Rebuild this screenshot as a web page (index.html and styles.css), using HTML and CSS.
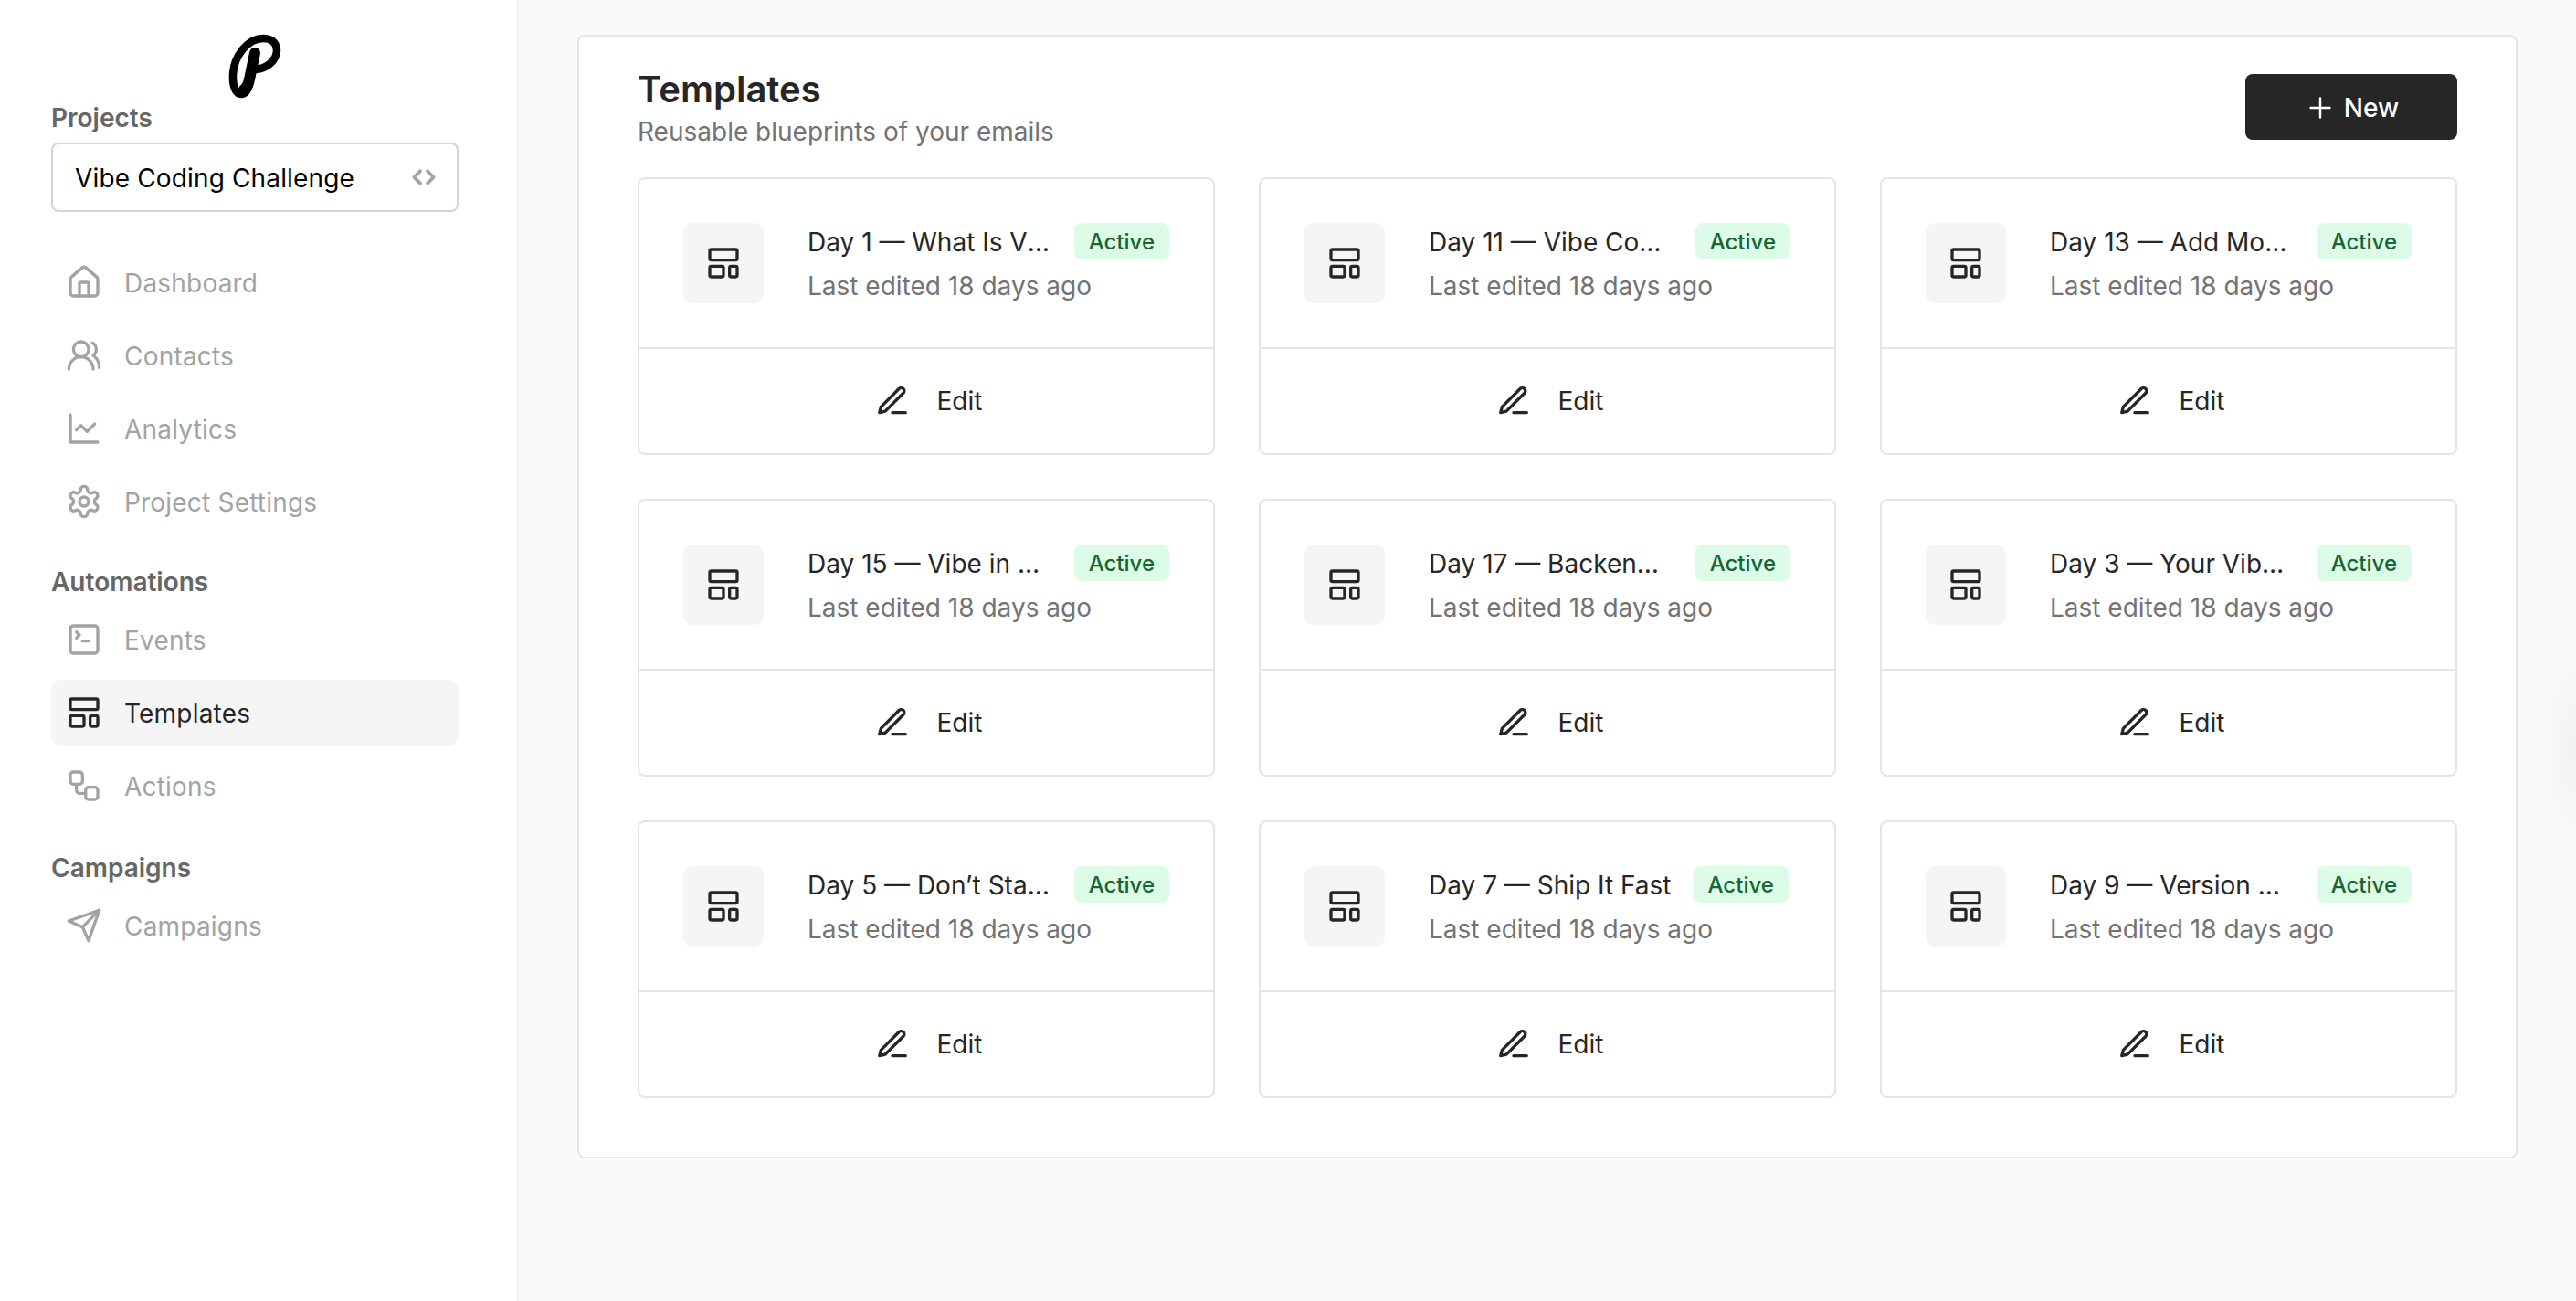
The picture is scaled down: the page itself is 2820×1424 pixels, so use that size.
FILE: index.html
```html
<!DOCTYPE html>
<html lang="en">
<head>
<meta charset="utf-8">
<title>Templates</title>
<link rel="stylesheet" href="styles.css">
</head>
<body>
<svg class="sprite" aria-hidden="true">
  <symbol id="i-home" viewBox="0 0 24 24"><path d="M15 21v-8a1 1 0 0 0-1-1h-4a1 1 0 0 0-1 1v8"/><path d="M3 10a2 2 0 0 1 .709-1.528l7-5.999a2 2 0 0 1 2.582 0l7 5.999A2 2 0 0 1 21 10v9a2 2 0 0 1-2 2H5a2 2 0 0 1-2-2z"/></symbol>
  <symbol id="i-users" viewBox="0 0 24 24"><path d="M18 21a8 8 0 0 0-16 0"/><circle cx="10" cy="8" r="5"/><path d="M22 20c0-3.37-2-6.5-4-8a5 5 0 0 0-.45-8.3"/></symbol>
  <symbol id="i-chart" viewBox="0 0 24 24"><path d="M3 3v18h18"/><path d="m19 9-5 5-4-4-3 3"/></symbol>
  <symbol id="i-gear" viewBox="0 0 24 24"><path d="M12.22 2h-.44a2 2 0 0 0-2 2v.18a2 2 0 0 1-1 1.73l-.43.25a2 2 0 0 1-2 0l-.15-.08a2 2 0 0 0-2.73.73l-.22.38a2 2 0 0 0 .73 2.73l.15.1a2 2 0 0 1 1 1.72v.51a2 2 0 0 1-1 1.74l-.15.09a2 2 0 0 0-.73 2.73l.22.38a2 2 0 0 0 2.73.73l.15-.08a2 2 0 0 1 2 0l.43.25a2 2 0 0 1 1 1.73V20a2 2 0 0 0 2 2h.44a2 2 0 0 0 2-2v-.18a2 2 0 0 1 1-1.73l.43-.25a2 2 0 0 1 2 0l.15.08a2 2 0 0 0 2.73-.73l.22-.39a2 2 0 0 0-.73-2.73l-.15-.08a2 2 0 0 1-1-1.74v-.5a2 2 0 0 1 1-1.74l.15-.09a2 2 0 0 0 .73-2.73l-.22-.38a2 2 0 0 0-2.73-.73l-.15.08a2 2 0 0 1-2 0l-.43-.25a2 2 0 0 1-1-1.73V4a2 2 0 0 0-2-2z"/><circle cx="12" cy="12" r="3"/></symbol>
  <symbol id="i-term" viewBox="0 0 24 24"><path d="m7 11 2-2-2-2"/><path d="M11 13h4"/><rect x="3" y="3" width="18" height="18" rx="2"/></symbol>
  <symbol id="i-layout" viewBox="0 0 24 24"><rect x="3" y="3" width="18" height="7" rx="1"/><rect x="3" y="14" width="9" height="7" rx="1"/><rect x="16" y="14" width="5" height="7" rx="1"/></symbol>
  <symbol id="i-flow" viewBox="0 0 24 24"><rect x="3" y="3" width="8" height="8" rx="2"/><path d="M7 11v4a2 2 0 0 0 2 2h4"/><rect x="13" y="13" width="8" height="8" rx="2"/></symbol>
  <symbol id="i-send" viewBox="0 0 24 24"><path d="m22 2-7 20-4-9-9-4Z"/><path d="M22 2 11 13"/></symbol>
  <symbol id="i-pen" viewBox="0 0 24 24"><path d="M12 20h9"/><path d="M16.5 3.5a2.12 2.12 0 0 1 3 3L7 19l-4 1 1-4Z"/></symbol>
  <symbol id="i-plus" viewBox="0 0 24 24"><path d="M5 12h14"/><path d="M12 5v14"/></symbol>
  <symbol id="i-swap" viewBox="0 0 24 24"><path d="m9 7-5 5 5 5"/><path d="m15 7 5 5-5 5"/></symbol>
</svg>

<div class="app">
  <aside class="sidebar">
    <svg class="logo" viewBox="0 0 58 70" aria-label="Logo"><path class="logo-loop" d="M30 38C42 37 53 28 53 17 53 8 46 4 38 4 22 4 6 22 5 44 4.500 56 8 65 14 65 19 65 22 60 23 54"/><path class="logo-stem" d="M17 60C20 58 22 54 23 49L29 20"/></svg>
    <div class="group-label first">Projects</div>
    <div class="select">
      <span class="select-text">Vibe Coding Challenge</span>
      <svg class="select-icon"><use href="#i-swap"/></svg>
    </div>
    <nav class="nav">
      <a class="nav-item"><svg class="icon"><use href="#i-home"/></svg>Dashboard</a>
      <a class="nav-item"><svg class="icon"><use href="#i-users"/></svg>Contacts</a>
      <a class="nav-item"><svg class="icon"><use href="#i-chart"/></svg>Analytics</a>
      <a class="nav-item"><svg class="icon"><use href="#i-gear"/></svg>Project Settings</a>
      <div class="group-label">Automations</div>
      <a class="nav-item"><svg class="icon"><use href="#i-term"/></svg>Events</a>
      <a class="nav-item active"><svg class="icon"><use href="#i-layout"/></svg>Templates</a>
      <a class="nav-item"><svg class="icon"><use href="#i-flow"/></svg>Actions</a>
      <div class="group-label late">Campaigns</div>
      <a class="nav-item"><svg class="icon"><use href="#i-send"/></svg>Campaigns</a>
    </nav>
  </aside>

  <main class="main">
    <section class="panel">
      <header class="panel-head">
        <div>
          <h1 class="title">Templates</h1>
          <p class="subtitle">Reusable blueprints of your emails</p>
        </div>
        <button class="btn-new"><svg class="plus"><use href="#i-plus"/></svg>New</button>
      </header>
      <div class="grid">
        <article class="card"><div class="card-body"><div class="thumb"><svg class="icon"><use href="#i-layout"/></svg></div><div class="info"><div class="line"><span class="name">Day 1 — What Is Vibe Coding?</span><span class="badge">Active</span></div><div class="meta">Last edited 18 days ago</div></div></div><a class="card-foot"><svg class="pen"><use href="#i-pen"/></svg>Edit</a></article>
        <article class="card"><div class="card-body"><div class="thumb"><svg class="icon"><use href="#i-layout"/></svg></div><div class="info"><div class="line"><span class="name">Day 11 — Vibe Coding Tools</span><span class="badge">Active</span></div><div class="meta">Last edited 18 days ago</div></div></div><a class="card-foot"><svg class="pen"><use href="#i-pen"/></svg>Edit</a></article>
        <article class="card"><div class="card-body"><div class="thumb"><svg class="icon"><use href="#i-layout"/></svg></div><div class="info"><div class="line"><span class="name">Day 13 — Add More Features</span><span class="badge">Active</span></div><div class="meta">Last edited 18 days ago</div></div></div><a class="card-foot"><svg class="pen"><use href="#i-pen"/></svg>Edit</a></article>
        <article class="card"><div class="card-body"><div class="thumb"><svg class="icon"><use href="#i-layout"/></svg></div><div class="info"><div class="line"><span class="name">Day 15 — Vibe in Production</span><span class="badge">Active</span></div><div class="meta">Last edited 18 days ago</div></div></div><a class="card-foot"><svg class="pen"><use href="#i-pen"/></svg>Edit</a></article>
        <article class="card"><div class="card-body"><div class="thumb"><svg class="icon"><use href="#i-layout"/></svg></div><div class="info"><div class="line"><span class="name">Day 17 — Backend Basics Guide</span><span class="badge">Active</span></div><div class="meta">Last edited 18 days ago</div></div></div><a class="card-foot"><svg class="pen"><use href="#i-pen"/></svg>Edit</a></article>
        <article class="card"><div class="card-body"><div class="thumb"><svg class="icon"><use href="#i-layout"/></svg></div><div class="info"><div class="line"><span class="name">Day 3 — Your Vibe Stack Setup</span><span class="badge">Active</span></div><div class="meta">Last edited 18 days ago</div></div></div><a class="card-foot"><svg class="pen"><use href="#i-pen"/></svg>Edit</a></article>
        <article class="card"><div class="card-body"><div class="thumb"><svg class="icon"><use href="#i-layout"/></svg></div><div class="info"><div class="line"><span class="name">Day 5 — Don’t Start With Code</span><span class="badge">Active</span></div><div class="meta">Last edited 18 days ago</div></div></div><a class="card-foot"><svg class="pen"><use href="#i-pen"/></svg>Edit</a></article>
        <article class="card"><div class="card-body"><div class="thumb"><svg class="icon"><use href="#i-layout"/></svg></div><div class="info"><div class="line"><span class="name">Day 7 — Ship It Fast</span><span class="badge">Active</span></div><div class="meta">Last edited 18 days ago</div></div></div><a class="card-foot"><svg class="pen"><use href="#i-pen"/></svg>Edit</a></article>
        <article class="card"><div class="card-body"><div class="thumb"><svg class="icon"><use href="#i-layout"/></svg></div><div class="info"><div class="line"><span class="name">Day 9 — Version Control Basics</span><span class="badge">Active</span></div><div class="meta">Last edited 18 days ago</div></div></div><a class="card-foot"><svg class="pen"><use href="#i-pen"/></svg>Edit</a></article>
      </div>
    </section>
  </main>
  <div class="edge-glow"></div>
</div>
</body>
</html>
```
FILE: styles.css
```css
* { box-sizing: border-box; }
html, body { margin: 0; height: 100%; }
body {
  font-family: "Inter", "Liberation Sans", sans-serif;
  font-size: 28px;
  color: #262626;
  background: #fafafa;
  overflow: hidden;
}
.sprite { display: none; }
svg { fill: none; stroke: currentColor; stroke-width: 2; stroke-linecap: round; stroke-linejoin: round; flex: none; }

.app { position: relative; display: flex; height: 1424px; overflow: hidden; }
.edge-glow {
  position: absolute;
  top: 700px;
  right: -40px;
  width: 80px;
  height: 240px;
  border-radius: 50%;
  background: radial-gradient(closest-side, rgba(0, 0, 0, .035), rgba(0, 0, 0, 0));
}

.sidebar {
  width: 568px;
  flex: none;
  background: #fff;
  border-right: 2px solid #f0f0f0;
  padding: 38px 64px 0 56px;
}
.logo { display: block; width: 58px; height: 70px; margin: 0 auto; color: #000; overflow: visible; }
.logo-loop { stroke-width: 8.5; }
.logo-stem { stroke-width: 12; }
.group-label { font-weight: 600; line-height: 36px; color: #666; margin: 33px 0 10px; }
.group-label.first { margin: 3px 0 9px; }
.select {
  display: flex;
  align-items: center;
  justify-content: space-between;
  height: 76px;
  padding: 2px 20px 0 24px;
  border: 2px solid #d4d4d4;
  border-radius: 8px;
  color: #000;
}
.select-text { letter-spacing: .15px; }
.select-icon { width: 32px; height: 32px; margin-top: -2px; color: #a3a3a3; stroke-width: 2.8; }
.nav { display: flex; flex-direction: column; gap: 8px; margin-top: 41px; }
.nav .group-label { margin: 25px 0 2px; padding-top: 1px; height: 36px; }
.nav .group-label.late { margin-top: 27px; }
.nav-item {
  display: flex;
  align-items: center;
  gap: 24px;
  height: 72px;
  padding: 2px 0 0 16px;
  border-radius: 10px;
  color: #a3a3a3;
  letter-spacing: .2px;
}
.nav-item .icon { margin-top: -2px; }
.nav-item.active { background: #f5f5f5; color: #262626; }
.icon { width: 40px; height: 40px; }

.main { flex: 1; min-width: 0; padding: 38px 64px 0; }
.panel {
  background: #fff;
  border: 2px solid #e5e5e5;
  border-radius: 8px;
  padding: 34px 64px 64px;
}
.panel-head { display: flex; justify-content: space-between; align-items: flex-start; height: 120px; }
.title { margin: 0; font-size: 40px; font-weight: 600; line-height: 48px; color: #262626; }
.subtitle { margin: 0; font-size: 28px; line-height: 44px; color: #737373; }
.btn-new {
  display: flex;
  align-items: center;
  justify-content: center;
  gap: 8px;
  width: 232px;
  height: 72px;
  margin-top: 7px;
  padding: 2px 0 0;
  border: 0;
  border-radius: 8px;
  background: #262626;
  color: #fff;
  font: 500 28px "Inter", sans-serif;
}
.plus { width: 36px; height: 36px; stroke-width: 1.6; }

.grid { display: grid; grid-template-columns: repeat(3, 632px); column-gap: 48px; row-gap: 48px; }
.card { height: 304px; border: 2px solid #e5e5e5; border-radius: 8px; display: flex; flex-direction: column; }
.card-body { display: flex; gap: 48px; height: 186px; padding: 48px 48px 0; border-bottom: 2px solid #e5e5e5; }
.thumb { width: 88px; height: 88px; flex: none; display: flex; align-items: center; justify-content: center; background: #f5f5f5; border-radius: 10px; color: #262626; }
.info { flex: 1; min-width: 0; }
.line { display: flex; align-items: center; gap: 24px; height: 40px; }
.name { flex: 0 1 auto; min-width: 0; padding-top: 2px; white-space: nowrap; overflow: hidden; text-overflow: ellipsis; color: #262626; }
.badge { flex: none; height: 40px; line-height: 41px; padding: 0 16px; background: #dcfce7; color: #166534; font-size: 24px; font-weight: 450; border-radius: 8px; }
.meta { margin-top: 9px; line-height: 40px; color: #737373; }
.card-foot { flex: 1; display: flex; align-items: center; justify-content: center; gap: 30px; padding-left: 5px; color: #262626; }
.pen { width: 38px; height: 38px; stroke-width: 2.1; }
```
